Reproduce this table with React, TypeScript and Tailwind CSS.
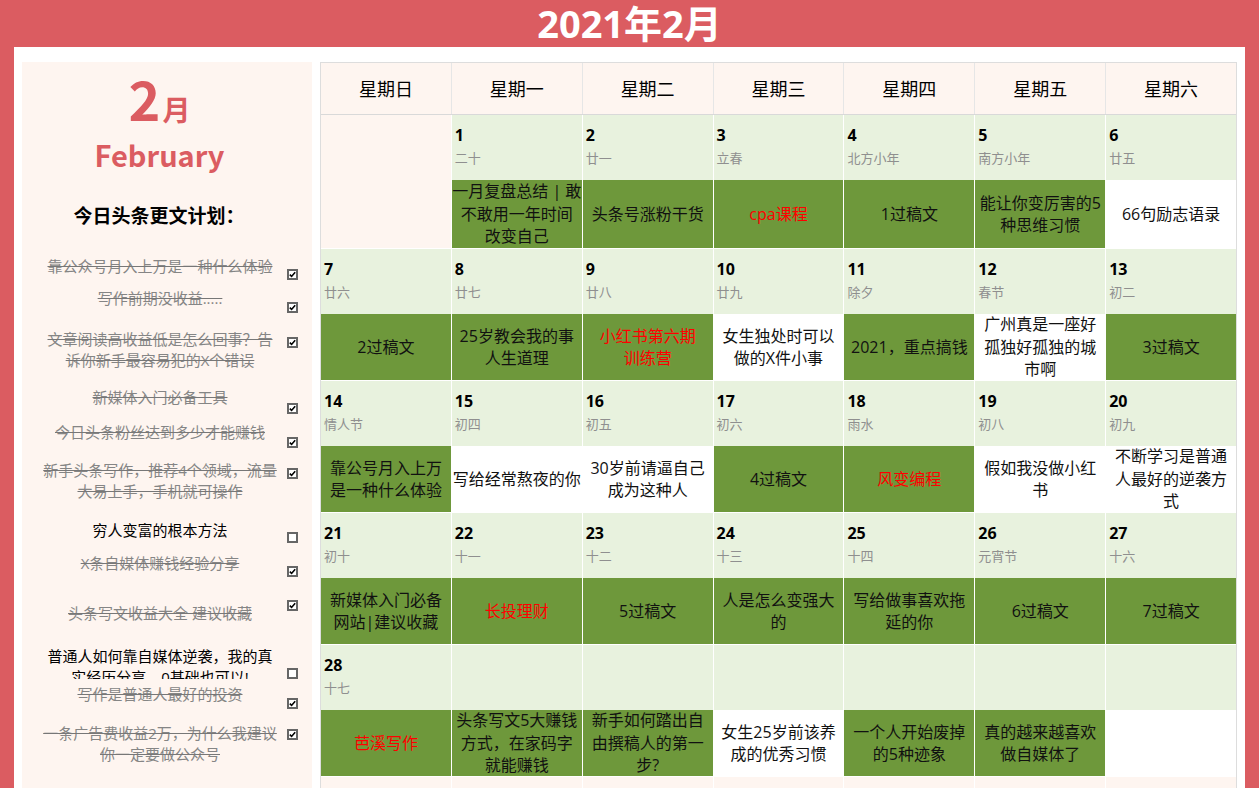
import React from "react";

const FONT = '"Open Sans", "Noto Sans CJK SC", sans-serif';
const CJK = '"Noto Sans CJK SC", sans-serif';

type Item = { t: string; done: boolean; h: number; to: number; co: number };

const items: Item[] = [
  { t: "靠公众号月入上万是一种什么体验", done: true, h: 34, to: 1.5, co: 15 },
  { t: "写作前期没收益.....", done: true, h: 34, to: 0, co: 14 },
  { t: "文章阅读高收益低是怎么回事？告诉你新手最容易犯的X个错误", done: true, h: 63, to: 7, co: 15 },
  { t: "新媒体入门必备工具", done: true, h: 35, to: 1.5, co: 18 },
  { t: "今日头条粉丝达到多少才能赚钱", done: true, h: 34, to: 1.5, co: 17 },
  { t: "新手头条写作，推荐4个领域，流量大易上手，手机就可操作", done: true, h: 61, to: 5.5, co: 14 },
  { t: "穷人变富的根本方法", done: false, h: 34, to: 4.5, co: 17 },
  { t: "X条自媒体赚钱经验分享", done: true, h: 34, to: 3.5, co: 17 },
  { t: "头条写文收益大全 建议收藏", done: true, h: 57, to: 19.5, co: 17 },
  { t: "普通人如何靠自媒体逆袭，我的真实经历分享，0基础也可以!", done: false, h: 39, to: 5.5, co: 28 },
  { t: "写作是普通人最好的投资", done: true, h: 36, to: 4.5, co: 19 },
  { t: "一条广告费收益2万，为什么我建议你一定要做公众号", done: true, h: 60, to: 8, co: 14 },
];

type Cell = {
  d?: string;
  l?: string;
  ev: string[];
  c: "g" | "w";
  red?: boolean;
  empty?: boolean;
};

const weeks: Cell[][] = [
  [
    { ev: [], c: "w", empty: true },
    { d: "1", l: "二十", ev: ["一月复盘总结 | 敢", "不敢用一年时间", "改变自己"], c: "g" },
    { d: "2", l: "廿一", ev: ["头条号涨粉干货"], c: "g" },
    { d: "3", l: "立春", ev: ["cpa课程"], c: "g", red: true },
    { d: "4", l: "北方小年", ev: ["1过稿文"], c: "g" },
    { d: "5", l: "南方小年", ev: ["能让你变厉害的5", "种思维习惯"], c: "g" },
    { d: "6", l: "廿五", ev: ["66句励志语录"], c: "w" },
  ],
  [
    { d: "7", l: "廿六", ev: ["2过稿文"], c: "g" },
    { d: "8", l: "廿七", ev: ["25岁教会我的事", "人生道理"], c: "g" },
    { d: "9", l: "廿八", ev: ["小红书第六期", "训练营"], c: "g", red: true },
    { d: "10", l: "廿九", ev: ["女生独处时可以", "做的X件小事"], c: "w" },
    { d: "11", l: "除夕", ev: ["2021，重点搞钱"], c: "g" },
    { d: "12", l: "春节", ev: ["广州真是一座好", "孤独好孤独的城", "市啊"], c: "w" },
    { d: "13", l: "初二", ev: ["3过稿文"], c: "g" },
  ],
  [
    { d: "14", l: "情人节", ev: ["靠公号月入上万", "是一种什么体验"], c: "g" },
    { d: "15", l: "初四", ev: ["写给经常熬夜的你"], c: "w" },
    { d: "16", l: "初五", ev: ["30岁前请逼自己", "成为这种人"], c: "w" },
    { d: "17", l: "初六", ev: ["4过稿文"], c: "g" },
    { d: "18", l: "雨水", ev: ["风变编程"], c: "g", red: true },
    { d: "19", l: "初八", ev: ["假如我没做小红", "书"], c: "w" },
    { d: "20", l: "初九", ev: ["不断学习是普通", "人最好的逆袭方", "式"], c: "w" },
  ],
  [
    { d: "21", l: "初十", ev: ["新媒体入门必备", "网站|建议收藏"], c: "g" },
    { d: "22", l: "十一", ev: ["长投理财"], c: "g", red: true },
    { d: "23", l: "十二", ev: ["5过稿文"], c: "g" },
    { d: "24", l: "十三", ev: ["人是怎么变强大", "的"], c: "g" },
    { d: "25", l: "十四", ev: ["写给做事喜欢拖", "延的你"], c: "g" },
    { d: "26", l: "元宵节", ev: ["6过稿文"], c: "g" },
    { d: "27", l: "十六", ev: ["7过稿文"], c: "g" },
  ],
  [
    { d: "28", l: "十七", ev: ["芭溪写作"], c: "g", red: true },
    { ev: ["头条写文5大赚钱", "方式，在家码字", "就能赚钱"], c: "g" },
    { ev: ["新手如何踏出自", "由撰稿人的第一", "步?"], c: "g" },
    { ev: ["女生25岁前该养", "成的优秀习惯"], c: "w" },
    { ev: ["一个人开始废掉", "的5种迹象"], c: "g" },
    { ev: ["真的越来越喜欢", "做自媒体了"], c: "g" },
    { ev: [], c: "w" },
  ],
];

const days = ["星期日", "星期一", "星期二", "星期三", "星期四", "星期五", "星期六"];

function Check({ done }: { done: boolean }) {
  return (
    <span className="flex h-[11px] w-[11px] shrink-0 items-center justify-center border-2 border-[#666] bg-white">
      {done && (
        <svg width="7" height="7" viewBox="0 0 7 7">
          <path d="M0.8 3.6 L2.6 5.4 L6.2 1.2" fill="none" stroke="#000" strokeWidth="1.6" />
        </svg>
      )}
    </span>
  );
}

function DayCell({ cell, eh }: { cell: Cell; eh: number }) {
  if (cell.empty) {
    return <div className="bg-[#FEF5F0]" style={{ height: 65 + eh }} />;
  }
  return (
    <div className="flex flex-col">
      <div className="h-[65px] bg-[#E8F2DE] pl-[3px]">
        {cell.d && (
          <>
            <div className="mt-[10px] text-[16px] font-bold leading-[20px] text-black">{cell.d}</div>
            <div className="mt-[4px] text-[13px] leading-[18px] text-[#8f8f8f]" style={{ fontFamily: CJK }}>
              {cell.l}
            </div>
          </>
        )}
      </div>
      <div
        className={`flex flex-col items-center justify-center overflow-hidden text-center text-[16px] leading-[22.5px] ${
          cell.c === "g" ? "bg-[#6E983B]" : "bg-white"
        } ${cell.red ? "text-[#FF0000]" : "text-[#111]"}`}
        style={{ height: eh }}
      >
        {cell.ev.map((line, i) => (
          <div key={i} className="whitespace-nowrap">
            {line}
          </div>
        ))}
      </div>
    </div>
  );
}

export default function App() {
  return (
    <div className="h-[788px] w-[1259px] overflow-hidden bg-[#DB5C61]" style={{ fontFamily: FONT }}>
      <div className="flex h-[47px] items-center justify-center text-[38px] font-bold leading-[47px] text-white">
        2021年2月
      </div>
      <div className="ml-[14px] flex h-[741px] w-[1231px] gap-[8px] bg-white pl-[8px] pt-[15px]">
        {/* Left panel */}
        <div className="flex h-[800px] w-[290px] shrink-0 flex-col bg-[#FEF5F0]">
          <div
            className="mt-[10px] flex h-[52px] w-[275px] items-baseline justify-center font-bold leading-[52px] text-[#DB5C61]"
            style={{ fontFamily: CJK }}
          >
            <span className="text-[54px]">2</span>
            <span className="ml-[2px] text-[28px]">月</span>
          </div>
          <div
            className="mt-[10px] h-[40px] w-[275px] text-center text-[29px] font-bold leading-[40px] text-[#DB5C61]"
            style={{ fontFamily: CJK }}
          >
            February
          </div>
          <div
            className="mt-[28px] h-[26px] w-[274px] text-center text-[19px] font-bold leading-[26px] text-black"
            style={{ fontFamily: CJK }}
          >
            今日头条更文计划：
          </div>
          <div className="mt-[26px] flex flex-col">
            {items.map((it, i) => (
              <div key={i} className="flex overflow-hidden" style={{ height: it.h }}>
                <div
                  className={`ml-[19px] w-[238px] text-center text-[15px] leading-[21px] ${
                    it.done ? "text-[#858585] line-through decoration-[#777]" : "text-black"
                  }`}
                  style={{ paddingTop: it.to }}
                >
                  {it.t}
                </div>
                <div className="ml-[8px]" style={{ paddingTop: it.co }}>
                  <Check done={it.done} />
                </div>
              </div>
            ))}
          </div>
        </div>

        {/* Calendar */}
        <div className="h-[800px] w-[917px] shrink-0 border border-[#ddd] bg-white">
          <div className="grid h-[52px] grid-cols-7 gap-x-px border-b border-[#d9d9d9] bg-[#e6e6e6]">
            {days.map((d) => (
              <div
                key={d}
                className="flex items-center justify-center bg-[#FEF5F0] text-[18px] text-black"
                style={{ fontFamily: CJK }}
              >
                {d}
              </div>
            ))}
          </div>
          <div className="grid grid-cols-7 gap-px bg-white">
            {weeks.map((w, wi) =>
              w.map((c, ci) => <DayCell key={`${wi}-${ci}`} cell={c} eh={wi === 0 ? 68 : 66} />)
            )}
            {days.map((d) => (
              <div key={"e" + d} className="h-[40px] bg-[#FEF5F0]" />
            ))}
          </div>
        </div>
      </div>
    </div>
  );
}
